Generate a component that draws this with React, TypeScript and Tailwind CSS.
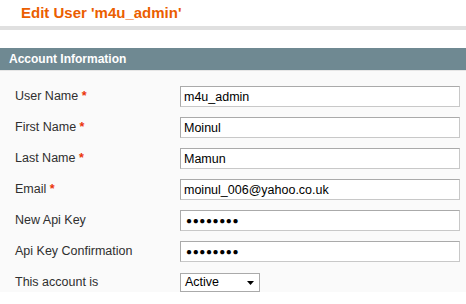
import React from 'react';

const fields: { label: string; required?: boolean; value: string; secret?: boolean }[] = [
  { label: 'User Name', required: true, value: 'm4u_admin' },
  { label: 'First Name', required: true, value: 'Moinul' },
  { label: 'Last Name', required: true, value: 'Mamun' },
  { label: 'Email', required: true, value: 'moinul_006@yahoo.co.uk' },
  { label: 'New Api Key', value: '●●●●●●●●', secret: true },
  { label: 'Api Key Confirmation', value: '●●●●●●●●', secret: true },
];

const App: React.FC = () => {
  return (
    <div className="w-[466px] h-[304px] overflow-hidden bg-white font-['Liberation_Sans',Arial,sans-serif]">
      {/* Page title */}
      <div className="h-[26px] pl-[21px] text-[15px] leading-[26px] font-bold text-[#eb5e00]">
        Edit User 'm4u_admin'
      </div>
      <div className="h-[4px] bg-[#e0e0e0]" />
      <div className="h-[18px]" />

      {/* Fieldset */}
      <div className="bg-[#fafafa]">
        <div className="h-[22px] bg-[#6f8992] pl-[9px] text-[12px] leading-[22px] font-bold text-white">
          Account Information
        </div>
        <div className="border-t border-[#e6e6e6] pt-[15px] pl-[15px] flex flex-col gap-[10px]">
          {fields.map(f => (
            <div key={f.label} className="flex items-center h-[21px]">
              <div className="w-[165px] text-[12.5px] text-[#2f2f2f]">
                {f.label}
                {f.required && <span className="text-[#eb340a] font-bold"> *</span>}
              </div>
              <input
                readOnly
                value={f.value}
                className={`w-[280px] h-[21px] bg-white border border-[#aaa] border-r-[#c8c8c8] border-b-[#c8c8c8] text-black outline-none ${
                  f.secret ? 'pl-[5px] text-[10px] tracking-[0.6px]' : 'pl-[3px] text-[12.5px]'
                }`}
              />
            </div>
          ))}
          <div className="flex items-center h-[19px] mt-[1px]">
            <div className="w-[165px] text-[12.5px] text-[#2f2f2f]">This account is</div>
            <div className="relative w-[80px] h-[19px] bg-white border border-[#aaa] pl-[4px] text-[12.5px] leading-[17px] text-black">
              Active
              <svg className="absolute right-[5px] top-[7px]" width="7" height="4" viewBox="0 0 7 4">
                <path d="M0 0H7L3.5 4Z" fill="#000" />
              </svg>
            </div>
          </div>
        </div>
      </div>
    </div>
  );
};

export default App;
